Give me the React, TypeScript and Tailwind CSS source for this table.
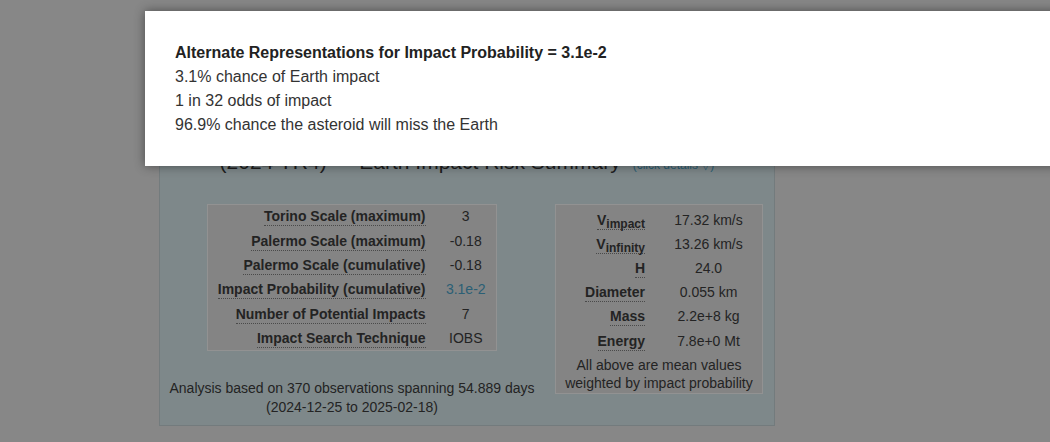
const leftRows = [
  { label: 'Torino Scale (maximum)', value: '3' },
  { label: 'Palermo Scale (maximum)', value: '-0.18' },
  { label: 'Palermo Scale (cumulative)', value: '-0.18' },
  { label: 'Impact Probability (cumulative)', value: '3.1e-2', link: true },
  { label: 'Number of Potential Impacts', value: '7' },
  { label: 'Impact Search Technique', value: 'IOBS' },
];

const rightRows = [
  { label: 'V', sub: 'impact', value: '17.32 km/s' },
  { label: 'V', sub: 'infinity', value: '13.26 km/s' },
  { label: 'H', value: '24.0' },
  { label: 'Diameter', value: '0.055 km' },
  { label: 'Mass', value: '2.2e+8 kg' },
  { label: 'Energy', value: '7.8e+0 Mt' },
];

function Label({ children }: { children: React.ReactNode }) {
  return (
    <span className="border-b border-dotted border-[#4a4a4a] pb-[1px]">{children}</span>
  );
}

export default function App() {
  return (
    <div
      className="relative h-[442px] w-[1050px] overflow-hidden bg-[#878787] text-[14px] text-[#232323]"
      style={{ fontFamily: '"Liberation Sans", Arial, sans-serif' }}
    >
      {/* summary panel (dimmed behind dialog) */}
      <div className="ml-[159px] mt-[116px] w-[616px] border border-[#737b7d] bg-[#7e888a] pt-[31px] pb-[8px]">
        <div className="flex h-[28px] items-baseline justify-center gap-[12px] leading-[28px]">
          <span className="text-[21px] text-[#1e1e1e]">(2024 YR4) — Earth Impact Risk Summary</span>
          <span className="text-[12px] text-[#2b5f75]">(click details ▽)</span>
        </div>

        <div className="mt-[28px] flex items-start">
          <div className="flex w-[384px] flex-col items-center">
            <table className="w-[290px] border border-[#929292] bg-[#848484]">
              <tbody>
                {leftRows.map((r) => (
                  <tr key={r.label} className="h-[24.4px]">
                    <td className="pr-[10px] text-right font-bold">
                      <Label>{r.label}</Label>
                    </td>
                    <td className={`w-[61px] text-center ${r.link ? 'text-[#2b5f75]' : ''}`}>{r.value}</td>
                  </tr>
                ))}
              </tbody>
            </table>
            <p className="mt-[28px] text-center leading-[19px]">
              Analysis based on 370 observations spanning 54.889 days
              <br />
              (2024-12-25 to 2025-02-18)
            </p>
          </div>

          <div className="ml-[11px] w-[208px] border border-[#929292] bg-[#848484] pt-[3px] pb-[1px]">
            <table className="w-full">
              <tbody>
                {rightRows.map((r) => (
                  <tr key={r.value} className="h-[24.2px]">
                    <td className="w-[99px] pr-[10px] text-right font-bold">
                      <Label>
                        {r.label}
                        {r.sub && <sub className="text-[12px] font-bold">{r.sub}</sub>}
                      </Label>
                    </td>
                    <td className="text-center">{r.value}</td>
                  </tr>
                ))}
                <tr>
                  <td colSpan={2} className="pt-[3px] text-center leading-[18px]">
                    All above are mean values
                    <br />
                    weighted by impact probability
                  </td>
                </tr>
              </tbody>
            </table>
          </div>
        </div>
      </div>

      {/* dialog */}
      <div className="absolute left-[145px] top-[11px] h-[155px] w-[960px] bg-white px-[30px] pt-[30px] text-[16px] leading-[24px] text-[#333] shadow-[0_0_10px_rgba(0,0,0,0.45)]">
        <div className="font-bold text-[#222]">Alternate Representations for Impact Probability = 3.1e-2</div>
        <div>3.1% chance of Earth impact</div>
        <div>1 in 32 odds of impact</div>
        <div>96.9% chance the asteroid will miss the Earth</div>
      </div>
    </div>
  );
}
